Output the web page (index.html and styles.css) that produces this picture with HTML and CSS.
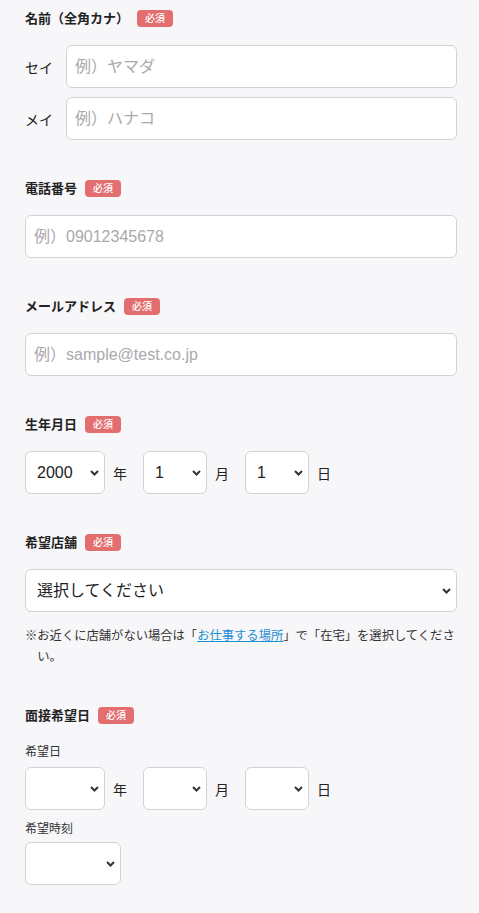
FILE: index.html
```html
<!DOCTYPE html>
<html lang="ja">
<head>
<meta charset="utf-8">
<title>フォーム</title>
<link rel="stylesheet" href="styles.css">
</head>
<body>
<form class="form">
  <section class="field">
    <div class="field-label"><span class="label-text">名前（全角カナ）</span><span class="badge">必須</span></div>
    <div class="name-grid">
      <span class="name-key">セイ</span>
      <input class="text-input" type="text" placeholder="例）ヤマダ">
      <span class="name-key">メイ</span>
      <input class="text-input" type="text" placeholder="例）ハナコ">
    </div>
  </section>

  <section class="field">
    <div class="field-label"><span class="label-text">電話番号</span><span class="badge">必須</span></div>
    <input class="text-input" type="tel" placeholder="例）09012345678">
  </section>

  <section class="field">
    <div class="field-label"><span class="label-text">メールアドレス</span><span class="badge">必須</span></div>
    <input class="text-input" type="email" placeholder="例）sample@test.co.jp">
  </section>

  <section class="field">
    <div class="field-label"><span class="label-text">生年月日</span><span class="badge">必須</span></div>
    <div class="date-row">
      <select class="select sel-year"><option>2000</option></select><span class="unit">年</span>
      <select class="select sel-md"><option>1</option></select><span class="unit">月</span>
      <select class="select sel-md"><option>1</option></select><span class="unit">日</span>
    </div>
  </section>

  <section class="field">
    <div class="field-label"><span class="label-text">希望店舗</span><span class="badge">必須</span></div>
    <select class="select sel-full"><option>選択してください</option></select>
    <p class="note">※お近くに店舗がない場合は「<a href="#" class="link">お仕事する場所</a>」で「在宅」を選択してください。</p>
  </section>

  <section class="field">
    <div class="field-label"><span class="label-text">面接希望日</span><span class="badge">必須</span></div>
    <div class="sub-label">希望日</div>
    <div class="date-row">
      <select class="select sel-year"><option></option></select><span class="unit">年</span>
      <select class="select sel-md"><option></option></select><span class="unit">月</span>
      <select class="select sel-md"><option></option></select><span class="unit">日</span>
    </div>
    <div class="sub-label sub-label-time">希望時刻</div>
    <select class="select sel-time"><option></option></select>
  </section>
</form>
</body>
</html>
```

FILE: styles.css
```css
* { box-sizing: border-box; }

html, body {
  margin: 0;
  padding: 0;
  background: #f7f6f8;
}

body {
  font-family: "Liberation Sans", "Noto Sans CJK JP", sans-serif;
  color: #333;
}

.form {
  padding: 8px 22px 20px 25px;
}

.field {
  margin-bottom: 38px;
}

.field-label {
  display: flex;
  align-items: center;
  height: 20px;
  margin-bottom: 17px;
}

.label-text {
  font-family: "Noto Sans CJK JP", sans-serif;
  font-size: 13px;
  font-weight: 700;
  color: #222;
  line-height: 20px;
}

.badge {
  display: inline-flex;
  align-items: center;
  justify-content: center;
  width: 36px;
  height: 17px;
  margin-left: 8px;
  border-radius: 4px;
  background: #e36e70;
  color: #fff;
  font-family: "Noto Sans CJK JP", sans-serif;
  font-size: 10px;
  font-weight: 500;
  line-height: 1;
}

.name-grid {
  display: grid;
  grid-template-columns: 41px 1fr;
  row-gap: 9px;
  align-items: center;
}

.name-key {
  font-family: "Noto Sans CJK JP", sans-serif;
  font-size: 14px;
  color: #222;
}

.text-input {
  display: block;
  width: 100%;
  height: 43px;
  padding: 0 8px;
  border: 1px solid #d4d2d5;
  border-radius: 6px;
  background: #fff;
  font-family: "Liberation Sans", "Noto Sans CJK JP", sans-serif;
  font-size: 16px;
  color: #222;
  outline: none;
}

.text-input::placeholder {
  color: #aaa9ac;
}

.select {
  display: block;
  height: 43px;
  padding: 0 20px 0 11px;
  border: 1px solid #d4d2d5;
  border-radius: 6px;
  background-color: #fff;
  background-image: url("data:image/svg+xml,%3Csvg xmlns='http://www.w3.org/2000/svg' width='9' height='6' viewBox='0 0 9 6'%3E%3Cpath d='M1 1l3.5 3.5L8 1' fill='none' stroke='%23333' stroke-width='2'/%3E%3C/svg%3E");
  background-repeat: no-repeat;
  background-position: right 5px center;
  -webkit-appearance: none;
  appearance: none;
  font-family: "Liberation Sans", "Noto Sans CJK JP", sans-serif;
  font-size: 16px;
  color: #222;
  outline: none;
}

.sel-year { width: 80px; }
.sel-md { width: 64px; }
.sel-full { width: 100%; }
.sel-time { width: 96px; }

.date-row {
  display: flex;
  align-items: center;
}

.unit {
  margin: 0 16px 0 8px;
  font-family: "Noto Sans CJK JP", sans-serif;
  font-size: 14px;
  color: #222;
}

.note {
  margin: 13px 0 0;
  padding-left: 1em;
  text-indent: -1em;
  font-family: "Noto Sans CJK JP", sans-serif;
  font-size: 12.3px;
  line-height: 21px;
  color: #333;
}

.link {
  color: #1b8ed4;
  text-decoration: underline;
}

.sub-label {
  margin: 0 0 7px;
  font-family: "Noto Sans CJK JP", sans-serif;
  font-size: 12px;
  line-height: 18px;
  color: #333;
}

.sub-label-time {
  margin: 9px 0 5px;
}
```
